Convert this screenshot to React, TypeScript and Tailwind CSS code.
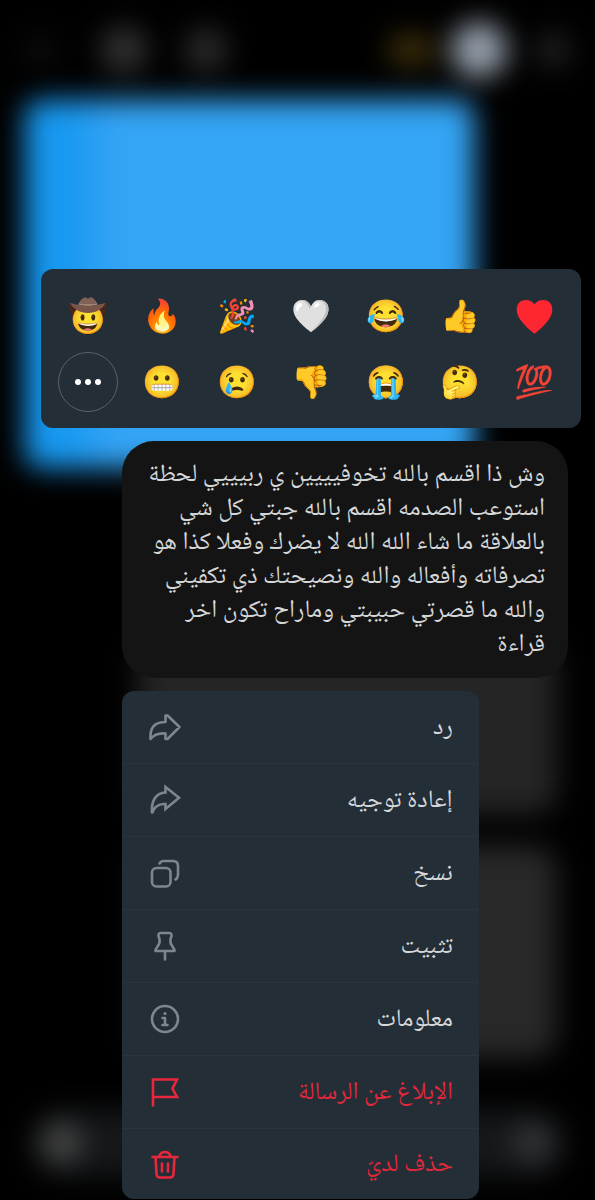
import type { ReactNode } from "react";

const reactions = [
  ["🤠", "🔥", "🎉", "🤍", "😂", "👍", "❤️"],
  ["more", "😬", "😢", "👎", "😭", "🤔", "💯"],
];

const message =
  "وش ذا اقسم بالله تخوفيييين ي ربيييي لحظة استوعب الصدمه اقسم بالله جبتي كل شي بالعلاقة ما شاء الله الله لا يضرك وفعلا كذا هو تصرفاته وأفعاله والله ونصيحتك ذي تكفيني والله ما قصرتي حبيبتي وماراح تكون اخر قراءة";

type Item = { label: string; icon: ReactNode; danger?: boolean };

const items: Item[] = [
  {
    label: "رد",
    icon: <path d="M3.5 30V27C3.5 17 9 13 18.500 13V6.5H20.5L32.500 18L20.5 30H18.500V24.500C12 24 7.500 25 3.5 30Z" />,
  },
  {
    label: "إعادة توجيه",
    icon: <path strokeLinejoin="miter" d="M5 31.500C4 19 8.500 11 18.500 10.500V5L32 15.700L18.500 27V22C12 21.500 7 24.500 5 31.500Z" />,
  },
  {
    label: "نسخ",
    icon: (
      <>
        <rect x="5" y="13" width="18.500" height="18.500" rx="4.500" />
        <path d="M12.500 8.500C13.500 6.800 14.500 6 16.500 6H26C29.500 6 31 7.500 31 11V19C31 22 30.500 23.500 28.500 24.500" />
      </>
    ),
  },
  {
    label: "تثبيت",
    icon: <path d="M18 23V31.500M8.500 23H27.500C27.500 19.500 24 18 23.500 14.500V11L24.500 8C25 6 24 5 22 5H14C12 5 11 6 11.500 8L12.500 11V14.500C12 18 8.500 19.500 8.500 23Z" />,
  },
  {
    label: "معلومات",
    icon: (
      <>
        <circle cx="18" cy="18" r="13" />
        <path d="M15.500 17H18V24M15.500 24H20.500" />
        <circle cx="18" cy="12.500" r="1.600" fill="currentColor" stroke="none" />
      </>
    ),
  },
  {
    label: "الإبلاغ عن الرسالة",
    danger: true,
    icon: <path strokeLinejoin="miter" strokeLinecap="butt" d="M6 32.500V5.500H30L25.500 14.500L30 23H6" />,
  },
  {
    label: "حذف لديّ",
    danger: true,
    icon: <path d="M5.500 11H30.500M12 11C13 7.500 15 6 18 6C21 6 23 7.500 24 11M8.500 11L9.500 28C9.700 30.500 11 31.500 13 31.500H23C25 31.500 26.300 30.500 26.500 28L27.500 11M15 17.500V25.500M21 17.500V25.500" />,
  },
];

function Backdrop() {
  return (
    <div aria-hidden="true" dir="ltr" className="absolute inset-0 overflow-hidden">
      <div className="flex h-full flex-col blur-[14px]">
        <div className="flex h-[100px] shrink-0 items-center px-6">
          <div className="size-8 rounded-full bg-[#0e0e0e]" />
          <div className="ml-11 size-12 rounded-full bg-[#303030]" />
          <div className="ml-9 size-11 rounded-full bg-[#2a2a2a]" />
          <div className="ml-auto h-8 w-12 rounded-full bg-[#3d2f0b]" />
          <div className="ml-4 size-14 rounded-full bg-[#96a0ac]" />
          <div className="ml-7 size-9 rounded-full bg-[#202020]" />
        </div>
        <div className="mr-[121px] ml-[25px] h-[368px] shrink-0 rounded-2xl bg-linear-to-r from-[#1798f0] from-10% via-[#34a4f4] via-20% to-[#34a4f4]" />
        <div className="mt-[172px] mr-[38px] ml-[138px] h-[174px] shrink-0 rounded-3xl bg-[#252525]" />
        <div className="mt-8 mr-[38px] ml-[138px] h-[212px] shrink-0 rounded-3xl bg-[#282828]" />
        <div className="mx-[30px] mt-[52px] flex h-[66px] shrink-0 items-center justify-between rounded-full bg-[#151719] px-3">
          <div className="size-10 rounded-full bg-[#484848]" />
          <div className="size-10 rounded-full bg-[#343538]" />
        </div>
      </div>
    </div>
  );
}

export default function App() {
  return (
    <main
      dir="rtl"
      lang="ar"
      className="relative flex min-h-screen flex-col gap-[13px] overflow-hidden bg-black pt-[269px] font-['Noto_Naskh_Arabic_UI','Noto_Naskh_Arabic','Liberation_Sans',sans-serif] text-[#d5d7d9]"
    >
      <Backdrop />
      <div dir="ltr" className="relative mr-[14px] ml-[41px] grid grid-cols-7 rounded-xl bg-[#242e37] pt-[14px] pr-[9px] pb-[13px] pl-[10px]">
        {reactions.flat().map((emoji) => (
          <div key={emoji} className="flex h-[66px] items-center justify-center">
            {emoji === "more" ? (
              <button aria-label="المزيد" className="flex size-[60px] items-center justify-center gap-1 rounded-full border border-[#59626b]">
                <span className="size-[6px] rounded-full bg-white" />
                <span className="size-[6px] rounded-full bg-white" />
                <span className="size-[6px] rounded-full bg-white" />
              </button>
            ) : emoji === "❤️" ? (
              <button aria-label="❤️">
                <svg viewBox="0 0 38 38" className="size-[37px]" fill="#fe2631" aria-hidden="true">
                  <path d="M19 36.500C18 36.500 11 30.500 6.500 25C2.500 20 .7 16.500 .7 11.800C.7 6 4.500 2 9.800 2C13.800 2 17 3.500 19 6.500C21 3.500 24.200 2 28.200 2C33.500 2 37.300 6 37.300 11.800C37.300 16.500 35.500 20 31.500 25C27 30.500 20 36.500 19 36.500Z" />
                </svg>
              </button>
            ) : (
              <button className="font-['Noto_Color_Emoji',sans-serif] text-[32px] leading-10">{emoji}</button>
            )}
          </div>
        ))}
      </div>

      <p className="relative mr-[27px] ml-[122px] rounded-[32px] bg-[#141414] px-[23px] pt-4 pb-[17px] text-[25px] leading-[34px]">
        {message}
      </p>

      <div className="relative mr-[116px] ml-[122px] flex flex-col overflow-hidden rounded-xl bg-[#242e37]">
        {items.map(({ label, icon, danger }) => (
          <button
            key={label}
            className={`flex h-[73px] items-center justify-between border-b border-[#29343d] pr-[26px] pl-[25px] text-[25px] leading-8 last:h-[70px] last:border-b-0 ${danger ? "text-[#e0283a]" : ""}`}
          >
            <span>{label}</span>
            <svg
              viewBox="0 0 36 36"
              className={`size-9 ${danger ? "text-[#e8273c]" : "text-[#7d868e]"}`}
              fill="none"
              stroke="currentColor"
              strokeWidth="2.6"
              strokeLinecap="round"
              strokeLinejoin="round"
              aria-hidden="true"
            >
              {icon}
            </svg>
          </button>
        ))}
      </div>
    </main>
  );
}
